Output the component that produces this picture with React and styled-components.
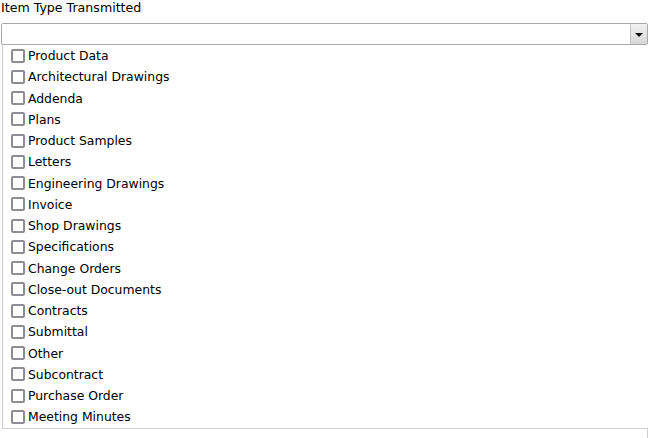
import React from 'react';
import styled, { createGlobalStyle } from 'styled-components';

const GlobalStyle = createGlobalStyle`
  html, body {
    margin: 0;
    padding: 0;
    background: #fff;
  }
  body {
    font-family: "DejaVu Sans", Verdana, sans-serif;
    font-size: 12.4px;
    color: #000;
  }
`;

const Page = styled.div`
  width: 648px;
  height: 438px;
  overflow: hidden;
  display: flex;
  flex-direction: column;
`;

const Label = styled.div`
  height: 23px;
  padding-left: 1px;
  line-height: 16px;
  font-size: 12.6px;
`;

const Select = styled.div`
  margin-left: 1px;
  height: 20px;
  border: 1px solid #a9a9a9;
  border-radius: 2px;
  display: flex;
  justify-content: flex-end;
  background: #fff;
`;

const Arrow = styled.div`
  width: 16px;
  border-left: 1px solid #c4c4c4;
  background: linear-gradient(#f2f2f2, #d6d6d6);
  display: flex;
  align-items: center;
  justify-content: center;
`;

const Triangle = styled.span`
  width: 0;
  height: 0;
  border-left: 4px solid transparent;
  border-right: 4px solid transparent;
  border-top: 4px solid #111;
  margin-top: 1px;
`;

const List = styled.div`
  margin-left: 2px;
  height: 383px;
  border-left: 1px solid #cfcfcf;
  border-bottom: 1px solid #cfcfcf;
  display: flex;
  flex-direction: column;
`;

const Row = styled.label`
  height: 21.25px;
  display: flex;
  align-items: center;
  padding-left: 8px;
  white-space: nowrap;
`;

const Box = styled.span`
  width: 10px;
  height: 10px;
  border: 2px solid #8d8d95;
  border-radius: 2px;
  margin-right: 3px;
  flex: none;
`;

const Tail = styled.div`
  align-self: flex-end;
  width: 1px;
  flex: 1;
  background: #cfcfcf;
`;

const items = [
  'Product Data',
  'Architectural Drawings',
  'Addenda',
  'Plans',
  'Product Samples',
  'Letters',
  'Engineering Drawings',
  'Invoice',
  'Shop Drawings',
  'Specifications',
  'Change Orders',
  'Close-out Documents',
  'Contracts',
  'Submittal',
  'Other',
  'Subcontract',
  'Purchase Order',
  'Meeting Minutes',
];

export default function App() {
  return (
    <Page>
      <GlobalStyle />
      <Label>Item Type Transmitted</Label>
      <Select>
        <Arrow>
          <Triangle />
        </Arrow>
      </Select>
      <List>
        {items.map((item) => (
          <Row key={item}>
            <Box />
            {item}
          </Row>
        ))}
      </List>
      <Tail />
    </Page>
  );
}
